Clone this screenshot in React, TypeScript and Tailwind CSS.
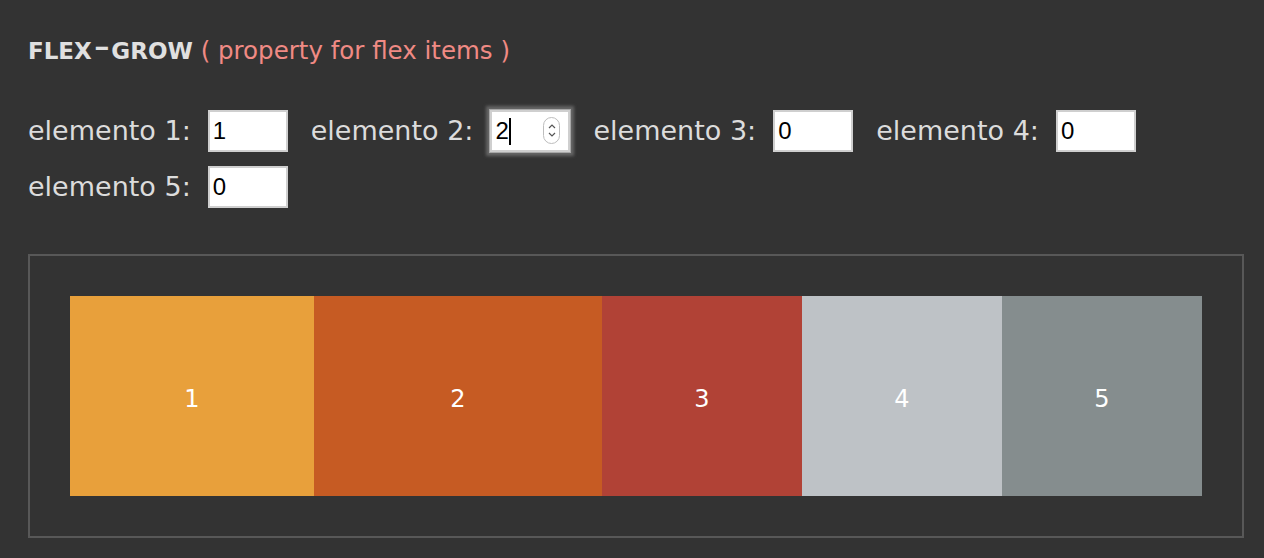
import React from "react";

const items = [
  { n: 1, grow: 1, color: "bg-[#e8a03b]" },
  { n: 2, grow: 2, color: "bg-[#c65b23]" },
  { n: 3, grow: 0, color: "bg-[#b14236]" },
  { n: 4, grow: 0, color: "bg-[#bec2c6]" },
  { n: 5, grow: 0, color: "bg-[#858d8e]" },
];

function Field({ n, value, focused }: { n: number; value: string; focused?: boolean }) {
  return (
    <div className="flex items-center">
      <span className="text-[27px] text-[#dcdcdc] leading-[42px] whitespace-nowrap">elemento {n}:</span>
      <div
        className={
          "relative ml-[17px] w-[80px] h-[42px] bg-white border-2 border-[#cfcfcf] " +
          (focused ? "shadow-[0_0_0_1px_#a8a8a8,0_0_3px_4px_#666666]" : "")
        }
      >
        <input
          readOnly
          value={value}
          className="w-full h-full pl-[3px] text-[24px] text-black bg-white outline-none"
          style={{ fontFamily: '"Liberation Sans", Arial, sans-serif' }}
        />
        {focused && (
          <>
            <div className="absolute left-[17px] top-[6px] w-[2px] h-[27px] bg-black" />
            <div className="absolute right-[8px] top-[5px] w-[17px] h-[27px] rounded-full border border-[#bdbdbd] bg-white flex flex-col items-center justify-center gap-[3px]">
              <svg width="8" height="5" viewBox="0 0 8 5">
                <path d="M1 4 L4 1 L7 4" fill="none" stroke="#555" strokeWidth="1.2" />
              </svg>
              <svg width="8" height="5" viewBox="0 0 8 5">
                <path d="M1 1 L4 4 L7 1" fill="none" stroke="#555" strokeWidth="1.2" />
              </svg>
            </div>
          </>
        )}
      </div>
    </div>
  );
}

export default function App() {
  return (
    <div
      className="w-full h-[558px] bg-[#333333] px-[28px] pt-[36px] overflow-hidden"
      style={{ fontFamily: '"DejaVu Sans", Verdana, sans-serif' }}
    >
      <div className="leading-[30px] whitespace-nowrap">
        <span className="font-bold text-[23px] text-[#e0e0e0]">
          FLEX<span className="inline-block mx-[5px] -translate-y-[4px] scale-x-[1.7]">-</span>GROW
        </span>
        <span className="text-[24.5px] text-[#f08a84]"> ( property for flex items )</span>
      </div>

      <div className="mt-[41px] flex flex-wrap gap-x-[23px] gap-y-[14px]">
        <Field n={1} value="1" />
        <Field n={2} value="2" focused />
        <Field n={3} value="0" />
        <Field n={4} value="0" />
        <Field n={5} value="0" />
      </div>

      <div className="mt-[46px] w-[1216px] border-2 border-[#585858] p-[40px]">
        <div className="flex h-[200px]">
          {items.map((it) => (
            <div
              key={it.n}
              className={"basis-[200px] shrink-0 flex items-center justify-center pt-[5px] text-white text-[24px] " + it.color}
              style={{ flexGrow: it.grow }}
            >
              {it.n}
            </div>
          ))}
        </div>
      </div>
    </div>
  );
}
